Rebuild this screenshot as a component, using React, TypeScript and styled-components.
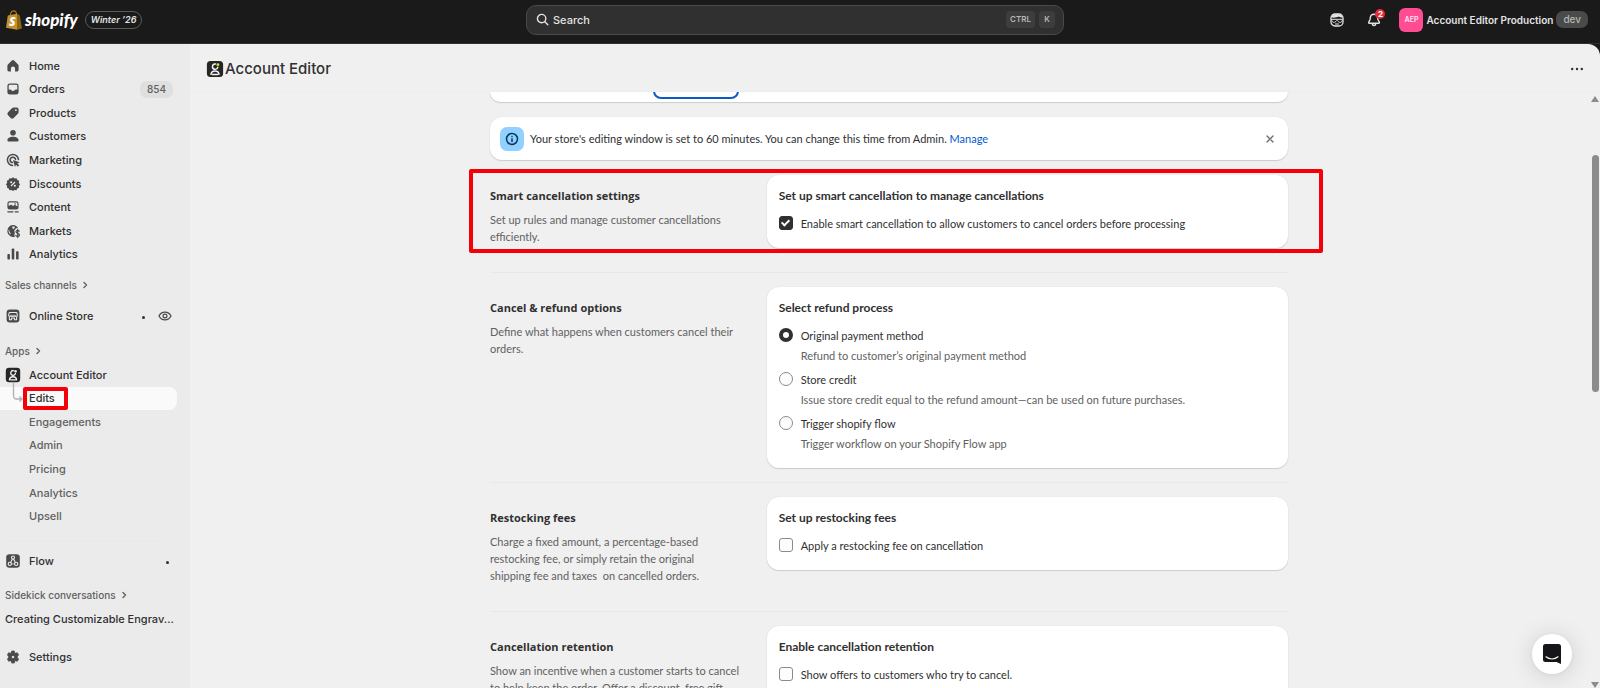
import React from "react";
import styled, { createGlobalStyle, css } from "styled-components";

const ui = `Inter, "Liberation Sans", sans-serif`;
const body = `Lato, "Open Sans", sans-serif`;

const GlobalStyle = createGlobalStyle`
  *, *::before, *::after { box-sizing: border-box; }
  body { margin: 0; background: #1a1a1a; font-family: ${ui}; font-size: 11px; color: #303030; }
  button, input { font: inherit; color: inherit; margin: 0; }
  button { border: 0; padding: 0; background: none; cursor: pointer; }
  a { color: inherit; text-decoration: none; }
  ul { list-style: none; margin: 0; padding: 0; }
  h1, h2, h3, p { margin: 0; }
  svg { display: block; flex: none; }
`;

/* ---------- Shell ---------- */

const Shell = styled.div`
  display: flex;
  flex-direction: column;
  height: 100vh;
  overflow: hidden;
`;

const TopBar = styled.header`
  flex: none;
  display: grid;
  grid-template-columns: 1fr minmax(200px, 538px) 1fr;
  align-items: center;
  height: 44px;
  padding: 0 12px 4px 2px;
  border-bottom: 1px solid #303030;
  background: #1a1a1a;
  color: #e3e3e3;
`;

const Brand = styled.a`
  display: flex;
  align-items: center;
  gap: 3px;
  padding-left: 4px;
  color: #ffffff;
`;

const Wordmark = styled.span`
  font: italic 900 17px/20px Lato, sans-serif;
`;

const Edition = styled.span`
  margin-left: 4px;
  padding: 0 5px;
  border: 1px solid #5a5a5a;
  border-radius: 9px;
  font: italic 600 9px/16px ${ui};
  color: #e3e3e3;
`;

const SearchBox = styled.label`
  display: flex;
  align-items: center;
  gap: 4px;
  height: 30px;
  padding: 0 8px 0 9px;
  border: 1px solid #4a4a4a;
  border-radius: 10px;
  background: #303030;
`;

const SearchInput = styled.input`
  flex: 1;
  min-width: 0;
  padding: 0;
  border: 0;
  outline: 0;
  background: none;
  font-weight: 500;
  &::placeholder { color: #e3e3e3; opacity: 1; }
`;

const Key = styled.kbd`
  min-width: 16px;
  padding: 0 4px;
  border-radius: 4px;
  background: #3d3d3d;
  color: #b5b5b5;
  font: 600 8px/17px ${ui};
  text-align: center;
`;

const Actions = styled.div`
  display: flex;
  align-items: center;
  justify-content: flex-end;
`;

const IconButton = styled.button`
  position: relative;
  display: grid;
  place-items: center;
  width: 24px;
  height: 24px;
  margin-right: 13px;
`;

const Badge = styled.span`
  position: absolute;
  top: 1px;
  right: 1px;
  width: 10px;
  height: 10px;
  border-radius: 5px;
  background: #e22c38;
  color: #ffffff;
  font: 700 8px/10px ${ui};
  text-align: center;
`;

const Account = styled.button`
  display: flex;
  align-items: center;
  gap: 3px;
  font-weight: 600;
  font-size: 10px;
  white-space: nowrap;
`;

const Avatar = styled.span`
  width: 24px;
  border-radius: 6px;
  background: #ff4c93;
  color: #ffd9e8;
  font: 700 7px/24px ${ui};
  text-align: center;
`;

const Env = styled.span`
  padding: 0 7px;
  border-radius: 7px;
  background: #4a4a4a;
  color: #b5b5b5;
  font: 500 10px/17px ${ui};
`;

const Workspace = styled.div`
  flex: 1;
  min-height: 0;
  display: flex;
`;

/* ---------- Sidebar ---------- */

const Sidebar = styled.nav`
  flex: none;
  display: flex;
  flex-direction: column;
  width: 190px;
  padding: 10px 13px 0 0;
  background: #ebebeb;
  color: #303030;
`;

const NavList = styled.ul<{ $height: number; $top?: number }>`
  flex: none;
  display: grid;
  grid-auto-rows: 1fr;
  height: ${(p) => p.$height}px;
  margin-top: ${(p) => p.$top ?? 0}px;
`;

const NavLink = styled.a<{ $sub?: boolean; $current?: boolean }>`
  position: relative;
  display: flex;
  align-items: center;
  gap: 8px;
  height: 100%;
  min-height: 23px;
  padding: 0 4px 0 ${(p) => (p.$sub ? 29 : 5)}px;
  border-radius: 0 8px 8px 0;
  color: #303030;
  font-weight: 500;
  ${(p) => p.$sub && css`color: #616161;`}
  ${(p) => p.$current && css`background: #fafafa; color: #303030;`}
`;

const NavText = styled.span`
  flex: 1;
  white-space: nowrap;
`;

const Count = styled.span`
  padding: 0 7px;
  border-radius: 7px;
  background: #dfdfdf;
  color: #616161;
  font: 500 10px/17px ${ui};
`;

const GroupLabel = styled.button<{ $top: number }>`
  display: flex;
  align-items: center;
  gap: 3px;
  height: 20px;
  margin-top: ${(p) => p.$top}px;
  padding-left: 5px;
  color: #616161;
  font-size: 10px;
  font-weight: 500;
`;

const NavRow = styled.div<{ $top: number }>`
  height: 24px;
  margin-top: ${(p) => p.$top}px;
`;

const Rule = styled.hr`
  width: 155px;
  margin: 13px 0 0 5px;
  border: 0;
  border-top: 1px solid #e8e8e8;
`;

const Dot = styled.span`
  width: 3px;
  height: 3px;
  margin: 2px 4px 0 0;
  border-radius: 50%;
  background: #303030;
`;

const Elbow = styled.svg`
  position: absolute;
  left: 12px;
  top: -4px;
`;

const Marker = styled.span`
  position: absolute;
  border: 4px solid #f40008;
  border-radius: 2px;
  pointer-events: none;
`;

const NavMarker = styled(Marker)`
  inset: 0 auto 0 23px;
  width: 45px;
`;

/* ---------- Main ---------- */

const Main = styled.main`
  flex: 1;
  min-width: 0;
  display: flex;
  flex-direction: column;
  border-radius: 0 12px 0 0;
  background: #f0f0f0;
`;

const PageBar = styled.div`
  flex: none;
  display: flex;
  align-items: center;
  gap: 1px;
  height: 48px;
  padding: 2px 16px 0;
  border-bottom: 1px solid #ededed;
`;

const PageTitle = styled.h1`
  flex: 1;
  font: 500 15px/20px ${ui};
`;

const Viewport = styled.div`
  flex: 1;
  min-height: 0;
  display: flex;
`;

const Scroller = styled.div`
  flex: 1;
  min-width: 0;
  overflow: hidden;
  font: 400 11px/17px ${body};
`;

const Content = styled.div`
  width: calc(100% - 48px);
  max-width: 798px;
  margin: 0 auto;
`;

const surface = css`
  background: #ffffff;
  box-shadow: 0 1px 1px #cccccc, 0 0 1px #cccccc;
`;

const TabStrip = styled.div`
  ${surface}
  display: flex;
  align-items: flex-end;
  height: 10px;
  padding: 0 163px 3px;
  border-radius: 0 0 12px 12px;
  clip-path: inset(0 -4px -4px);
`;

const Tab = styled.button`
  width: 86px;
  height: 28px;
  border: 2px solid #0a5bc4;
  border-radius: 8px;
`;

const Banner = styled.div`
  ${surface}
  display: flex;
  align-items: center;
  gap: 6px;
  height: 43px;
  margin: 15px 0;
  padding: 0 12px 0 10px;
  border-radius: 12px;
`;

const BannerIcon = styled.span`
  display: grid;
  place-items: center;
  width: 24px;
  height: 24px;
  border-radius: 7px;
  background: #91d0ff;
`;

const BannerText = styled.p`
  flex: 1;
`;

const Link = styled.a`
  color: #005bd3;
`;

const Section = styled.section`
  position: relative;
  display: grid;
  grid-template-columns: 1fr 2fr;
  gap: 16px;
  align-items: start;
`;

const SectionMarker = styled(Marker)`
  inset: -6px -35px 5px -21px;
`;

const Divider = styled.hr`
  margin: 14px 0;
  border: 0;
  border-top: 1px solid #e8e8e8;
`;

const Intro = styled.div`
  display: grid;
  gap: 5px;
  padding: 11px 0 13px;
  color: #616161;
`;

const Heading = styled.h2`
  font: 700 11px/20px "Open Sans", sans-serif;
  color: #303030;
`;

const IntroText = styled.p`
  max-width: 252px;
  white-space: pre-wrap;
`;

const Card = styled.div`
  ${surface}
  padding: 12px 12px 13px;
  border-radius: 12px;
`;

const CardHeading = styled.h3`
  margin-bottom: 6px;
  font: 700 12px/18px ${body};
`;

const Choice = styled.label`
  display: flex;
  align-items: center;
  gap: 8px;
  min-height: 24px;
`;

const Help = styled.p`
  padding: 0 0 2px 22px;
  line-height: 18px;
  color: #616161;
`;

const Checkbox = styled.input.attrs({ type: "checkbox" })`
  appearance: none;
  display: grid;
  place-items: center;
  width: 14px;
  height: 14px;
  border: 1px solid #8a8a8a;
  border-radius: 3px;
  background: #fdfdfd;
  &:checked { border-color: #303030; background: #303030; }
  &:checked::after {
    content: "";
    width: 5px;
    height: 8px;
    margin-top: -2px;
    border: solid #ffffff;
    border-width: 0 2px 2px 0;
    transform: rotate(45deg);
  }
`;

const Radio = styled.input.attrs({ type: "radio" })`
  appearance: none;
  width: 14px;
  height: 14px;
  border: 1px solid #8a8a8a;
  border-radius: 50%;
  background: #fdfdfd;
  &:checked { border: 4px solid #303030; }
`;

const ScrollBar = styled.div`
  flex: none;
  display: flex;
  flex-direction: column;
  align-items: center;
  width: 12px;
  padding: 4px 0 0 2px;
`;

const Track = styled.div`
  flex: 1;
  padding-top: 53px;
`;

const Thumb = styled.div`
  width: 7px;
  height: 45%;
  border-radius: 4px;
  background: #8b8b8b;
`;

const ChatButton = styled.button`
  position: fixed;
  right: 28px;
  bottom: 14px;
  display: grid;
  place-items: center;
  width: 40px;
  height: 40px;
  border-radius: 50%;
  background: #ffffff;
  box-shadow: 0 1px 6px rgba(0, 0, 0, 0.06), 0 2px 24px rgba(0, 0, 0, 0.14);
`;

/* ---------- Icons ---------- */

type IconProps = { children: React.ReactNode; size?: number };

const Icon = ({ children, size = 16 }: IconProps) => (
  <svg width={size} height={size} viewBox="0 0 20 20" fill="#4a4a4a" aria-hidden="true">
    {children}
  </svg>
);

const HomeIcon = () => (
  <Icon>
    <path d="M8.6 3.1a2 2 0 0 1 2.8 0l4.7 4.6c.6.6.9 1.300.9 2.100v5.200A1.800 1.800 0 0 1 15.200 16.800H12.600v-3.600a2.600 2.600 0 0 0-5.200 0v3.600H4.800A1.800 1.800 0 0 1 3 15V9.800c0-.8.3-1.500.9-2.100z" />
  </Icon>
);
const OrdersIcon = () => (
  <Icon>
    <path
      fillRule="evenodd"
      d="M6 3h8a3 3 0 0 1 3 3v8a3 3 0 0 1-3 3H6a3 3 0 0 1-3-3V6a3 3 0 0 1 3-3zm0 1.600A1.400 1.400 0 0 0 4.600 6v4.500h1.900c.7 0 1.200.4 1.500 1 .4.700 1.100 1 2 1s1.600-.3 2-1c.3-.6.8-1 1.500-1h1.900V6A1.400 1.400 0 0 0 14 4.600z"
    />
  </Icon>
);
const TagIcon = () => (
  <Icon>
    <path
      fillRule="evenodd"
      d="M11.200 3h3.600A2.200 2.200 0 0 1 17 5.200v3.600c0 .8-.3 1.600-.9 2.200l-5.300 5.200a2.600 2.600 0 0 1-3.700 0l-3.300-3.300a2.600 2.600 0 0 1 0-3.700L9 3.900C9.600 3.300 10.400 3 11.200 3zM13.600 7.600a1.200 1.200 0 1 0 0-2.400 1.200 1.200 0 0 0 0 2.400z"
    />
  </Icon>
);
const PersonIcon = () => (
  <Icon>
    <circle cx="10" cy="6" r="3.500" />
    <path d="M3 15.200c0-2.600 3.200-4.300 7-4.300s7 1.700 7 4.300c0 1-.8 1.600-1.700 1.600H4.700c-.9 0-1.700-.6-1.700-1.600z" />
  </Icon>
);
const TargetIcon = () => (
  <Icon>
    <g fill="none" stroke="#4a4a4a" strokeWidth="1.900" strokeLinecap="round">
      <path d="M16.800 9.500A6.900 6.900 0 1 0 9.500 16.800" />
      <path d="M13.200 9.300A3.400 3.400 0 1 0 9.300 13.200" />
    </g>
    <path d="M10 10l8.400 2.900-3 1.500 2.300 2.300-1.600 1.600-2.300-2.300-1.300 2.700z" />
  </Icon>
);
const DiscountIcon = () => (
  <Icon>
    <path d="M10 2.200l2 1.500 2.500-.4.9 2.300 2.300.9-.4 2.500 1.500 2-1.500 2 .2 2.300-2.200.9-.9 2.200-2.400-.3-2 1.300-2-1.300-2.400.3-.9-2.200-2.200-.9.200-2.300-1.500-2 1.500-2-.4-2.500 2.300-.9.900-2.300 2.500.4z" transform="translate(0 -.5)" />
    <g stroke="#ebebeb" strokeWidth="1.400" fill="#ebebeb">
      <path d="M7.500 12.500l5-5" />
      <circle cx="7.700" cy="7.900" r=".6" />
      <circle cx="12.300" cy="12.200" r=".6" />
    </g>
  </Icon>
);
const ContentIcon = () => (
  <Icon>
    <path
      fillRule="evenodd"
      d="M5.800 2.800h8.400A2.800 2.800 0 0 1 17 5.600v4.600a2.800 2.800 0 0 1-2.800 2.800H5.800A2.800 2.800 0 0 1 3 10.200V5.600a2.800 2.800 0 0 1 2.800-2.800zm0 1.500c-.8 0-1.300.5-1.300 1.300v3.200l2.200-1.400c.5-.4 1.200-.4 1.700 0l1.700 1.500 1.300-1c.5-.4 1.200-.4 1.700 0l2.400 1.400V5.600c0-.8-.5-1.300-1.300-1.300z"
    />
    <circle cx="12.600" cy="6.200" r="1" />
    <path d="M3 15.200h7.500v1.800H3zM12.200 15.200H17v1.800h-4.800z" />
  </Icon>
);
const MarketsIcon = () => (
  <Icon>
    <path
      fillRule="evenodd"
      d="M10 2.500c2.900 0 5.300 1.600 6.500 4-1.200-.3-2.700.1-3.600 1-1.500 1.500-1.500 3.500-.5 5-.9 1.200-.9 3.200 0 4.700A7.500 7.500 0 1 1 10 2.500zM4.600 8.200c-.6 2.300.2 4.700 2.200 6.200.5-1 .2-1.800-.4-2.500-.7-.8-1.300-1.300-.9-2.400zM9.800 4.200C9 5 8.800 6 9.500 6.800c.6.700 1.600.4 2.200-.3.500-.6.700-1.200.5-1.800z"
    />
    <path
      d="M17.800 10.300c-.5-.8-1.300-1-2-1-1.200 0-2 .7-2 1.700 0 2.500 4.300 1.300 4.300 4 0 1.100-.9 1.900-2.200 1.900-1 0-1.900-.4-2.300-1.300M15.900 8v10.200"
      fill="none"
      stroke="#4a4a4a"
      strokeWidth="1.500"
      strokeLinecap="round"
    />
  </Icon>
);
const BarsIcon = () => (
  <Icon>
    <rect x="3" y="10" width="3.200" height="7" rx="1" />
    <rect x="8.400" y="3" width="3.200" height="14" rx="1" />
    <rect x="13.800" y="6.500" width="3.200" height="10.500" rx="1" />
  </Icon>
);
const StoreIcon = () => (
  <Icon>
    <rect x="2" y="2" width="16" height="16" rx="4" />
    <g fill="none" stroke="#ebebeb" strokeWidth="1.300" strokeLinejoin="round">
      <path d="M5.500 5.500h9l1 3.500c0 1-.8 1.500-1.500 1.500s-1.500-.5-1.500-1.500c0 1-.7 1.500-1.300 1.500S10 10 10 9c0 1-.6 1.500-1.200 1.500S7.500 10 7.500 9c0 1-.8 1.500-1.500 1.500S4.500 10 4.500 9z" />
      <path d="M5.500 10.500v4.200h2.700v-2.200h3.600v2.200h2.700v-4.200" />
    </g>
  </Icon>
);
const EditorIcon = ({ size = 16, accent = "#ebebeb" }: { size?: number; accent?: string }) => (
  <Icon size={size}>
    <rect x="1" y="1" width="18" height="18" rx="4" fill="#262626" />
    <g fill="none" stroke="#f4f4f4" strokeWidth="1.600" strokeLinecap="round">
      <path d="M10.500 4.400a3 3 0 1 0 2.600 3.600" />
      <path d="M5.500 16c.3-2.500 2-3.800 4.500-3.800s4.200 1.300 4.500 3.800M7.200 16.200h5.600" />
    </g>
    <circle cx="13.200" cy="5.200" r="1.600" fill={accent} />
  </Icon>
);
const FlowIcon = () => (
  <Icon>
    <rect x="1.500" y="1.500" width="17" height="17" rx="4" />
    <g fill="none" stroke="#ebebeb" strokeWidth="1.400">
      <circle cx="10" cy="5.700" r="1.900" />
      <circle cx="6" cy="13.600" r="2" />
      <circle cx="14" cy="13.600" r="2" />
      <path d="M9.300 7.600L7 11.800M10.700 7.600l2.300 4.200M8 13.600h1.500M10.500 13.600H12" />
    </g>
  </Icon>
);
const GearIcon = () => (
  <Icon>
    <path
      fillRule="evenodd"
      d="M8.400 2.500h3.200l.5 2.100 1.200.7 2.100-.6 1.600 2.700-1.500 1.600v2l1.500 1.600-1.600 2.700-2.100-.6-1.200.7-.5 2.100H8.400l-.5-2.100-1.200-.7-2.100.6L3 12.600 4.500 11V9L3 7.400l1.600-2.700 2.100.6 1.200-.7zM10 12a2 2 0 1 0 0-4 2 2 0 0 0 0 4z"
      stroke="#4a4a4a"
      strokeLinejoin="round"
    />
  </Icon>
);
const EyeIcon = () => (
  <Icon>
    <g fill="none" stroke="#4a4a4a" strokeWidth="1.500">
      <path d="M2.500 10c1.500-3 4.300-4.800 7.500-4.800s6 1.800 7.500 4.800c-1.500 3-4.300 4.800-7.500 4.800S4 13 2.500 10z" />
      <circle cx="10" cy="10" r="2.400" />
    </g>
  </Icon>
);
const Chevron = () => (
  <svg width="10" height="10" viewBox="0 0 10 10" fill="none" stroke="#616161" strokeWidth="1.400" strokeLinecap="round" strokeLinejoin="round" aria-hidden="true">
    <path d="M4 2.500L6.500 5 4 7.500" />
  </svg>
);
const BagLogo = () => (
  <svg width="16" height="20" viewBox="0 0 16 20" aria-hidden="true">
    <path d="M4.200 5.800C4.500 3 6 .9 7.900.9c1.600 0 2.600 1.600 2.700 4.200" fill="none" stroke="#a87a1c" strokeWidth="1.100" />
    <path d="M1.800 5.600L11 3.800v16L0 17.700z" fill="#c4922c" />
    <path d="M11 3.800l2.700 1.400L16 18.500l-5 1.300z" fill="#8f6410" />
    <text x="3" y="16" fontFamily="Open Sans, sans-serif" fontSize="12" fontWeight="800" fontStyle="italic" fill="#fff">
      S
    </text>
  </svg>
);

/* ---------- Data ---------- */

const primary = [
  { label: "Home", icon: <HomeIcon /> },
  { label: "Orders", icon: <OrdersIcon />, count: "854" },
  { label: "Products", icon: <TagIcon /> },
  { label: "Customers", icon: <PersonIcon /> },
  { label: "Marketing", icon: <TargetIcon /> },
  { label: "Discounts", icon: <DiscountIcon /> },
  { label: "Content", icon: <ContentIcon /> },
  { label: "Markets", icon: <MarketsIcon /> },
  { label: "Analytics", icon: <BarsIcon /> },
];

const appPages = ["Engagements", "Admin", "Pricing", "Analytics", "Upsell"];

const refundOptions = [
  { id: "original", label: "Original payment method", help: "Refund to customer’s original payment method" },
  { id: "credit", label: "Store credit", help: "Issue store credit equal to the refund amount—can be used on future purchases." },
  { id: "flow", label: "Trigger shopify flow", help: "Trigger workflow on your Shopify Flow app" },
];

/* ---------- Composition ---------- */

const SettingsIntro = ({ title, text }: { title: string; text: string }) => (
  <Intro>
    <Heading>{title}</Heading>
    <IntroText>{text}</IntroText>
  </Intro>
);

const Header = () => (
  <TopBar>
    <Brand href="#">
      <BagLogo />
      <Wordmark>shopify</Wordmark>
      <Edition>Winter ’26</Edition>
    </Brand>
    <SearchBox>
      <svg width="13" height="13" viewBox="0 0 13 13" fill="none" stroke="#e3e3e3" strokeWidth="1.400" strokeLinecap="round" aria-hidden="true">
        <circle cx="5.600" cy="5.600" r="4.200" />
        <path d="M8.800 8.800l3 3" />
      </svg>
      <SearchInput type="search" placeholder="Search" aria-label="Search" />
      <Key>CTRL</Key>
      <Key>K</Key>
    </SearchBox>
    <Actions>
      <IconButton aria-label="Sidekick">
        <svg width="14" height="14" viewBox="0 0 14 14" aria-hidden="true">
          <rect x="1" y="1" width="12" height="12" rx="4" fill="none" stroke="#e3e3e3" strokeWidth="1.300" />
          <path d="M1.500 4.600C1.500 2 4 1 7 1s5.500 1 5.500 3.600c-1.700-.1-2.700-.4-3.600-1C7.200 4.500 4.500 4.900 1.500 4.600z" fill="#e3e3e3" />
          <path d="M1 6.300h12M2 7.500c.2 1.300.8 1.900 1.800 1.900S5.700 8.700 7 7.300c1.300 1.400 2.200 2.100 3.200 2.100s1.600-.6 1.800-1.900" fill="none" stroke="#e3e3e3" strokeWidth="1" />
          <path d="M5.500 11h3" stroke="#e3e3e3" strokeWidth="1" strokeLinecap="round" />
        </svg>
      </IconButton>
      <IconButton aria-label="Notifications">
        <svg width="14" height="14" viewBox="0 0 14 14" fill="none" stroke="#e3e3e3" strokeWidth="1.400" strokeLinejoin="round" aria-hidden="true">
          <path d="M7 1.200c-2.300 0-3.700 1.700-3.700 3.800 0 1.800-.5 2.800-1.400 3.700-.6.600-.3 1.500.5 1.500h9.200c.8 0 1.100-.9.500-1.500-.9-.9-1.400-1.900-1.400-3.700C10.700 2.900 9.300 1.200 7 1.200z" />
          <path d="M5.300 10.500c0 1.300.7 2 1.700 2s1.700-.7 1.700-2" />
        </svg>
        <Badge>2</Badge>
      </IconButton>
      <Account>
        <Avatar>AEP</Avatar>
        Account Editor Production
        <Env>dev</Env>
      </Account>
    </Actions>
  </TopBar>
);

const SideNav = () => (
  <Sidebar aria-label="Main">
    <NavList $height={212}>
      {primary.map((item) => (
        <li key={item.label}>
          <NavLink href="#">
            {item.icon}
            <NavText>{item.label}</NavText>
            {item.count && <Count>{item.count}</Count>}
          </NavLink>
        </li>
      ))}
    </NavList>
    <GroupLabel $top={9}>
      Sales channels
      <Chevron />
    </GroupLabel>
    <NavRow $top={9}>
      <NavLink href="#">
        <StoreIcon />
        <NavText>Online Store</NavText>
        <Dot />
        <EyeIcon />
      </NavLink>
    </NavRow>
    <GroupLabel $top={13}>
      Apps
      <Chevron />
    </GroupLabel>
    <NavList $height={165} $top={2}>
      <li>
        <NavLink href="#">
          <EditorIcon />
          <NavText>Account Editor</NavText>
        </NavLink>
      </li>
      <li>
        <NavLink href="#" $sub $current aria-current="page">
          <Elbow width="11" height="20" viewBox="0 0 11 20" fill="none" stroke="#b0b0b0" strokeWidth="1.300" aria-hidden="true">
            <path d="M1.500 0v12.500c0 2 1 3.500 3 3.500H10M7.500 13.500L10 16l-2.500 2.500" />
          </Elbow>
          <NavText>Edits</NavText>
          <NavMarker />
        </NavLink>
      </li>
      {appPages.map((page) => (
        <li key={page}>
          <NavLink href="#" $sub>
            <NavText>{page}</NavText>
          </NavLink>
        </li>
      ))}
    </NavList>
    <Rule />
    <NavRow $top={7}>
      <NavLink href="#">
        <FlowIcon />
        <NavText>Flow</NavText>
        <Dot />
      </NavLink>
    </NavRow>
    <GroupLabel $top={12}>
      Sidekick conversations
      <Chevron />
    </GroupLabel>
    <NavRow $top={2}>
      <NavLink href="#">
        <NavText>Creating Customizable Engrav...</NavText>
      </NavLink>
    </NavRow>
    <NavRow $top={14}>
      <NavLink href="#">
        <GearIcon />
        <NavText>Settings</NavText>
      </NavLink>
    </NavRow>
  </Sidebar>
);

const SettingsPage = () => (
  <Content>
    <TabStrip>
      <Tab aria-label="Cancellations" />
    </TabStrip>
    <Banner role="status">
      <BannerIcon>
        <svg width="14" height="14" viewBox="0 0 14 14" fill="none" stroke="#003a5a" strokeWidth="1.500" strokeLinecap="round" aria-hidden="true">
          <circle cx="7" cy="7" r="5.500" />
          <path d="M7 6.800v2.700M7 4.400v.1" />
        </svg>
      </BannerIcon>
      <BannerText>
        Your store's editing window is set to 60 minutes. You can change this time from Admin. <Link href="#">Manage</Link>
      </BannerText>
      <button aria-label="Dismiss">
        <svg width="12" height="12" viewBox="0 0 12 12" stroke="#6a6a6a" strokeWidth="1.300" strokeLinecap="round" aria-hidden="true">
          <path d="M3 3l6 6M9 3L3 9" />
        </svg>
      </button>
    </Banner>

    <Section>
      <SettingsIntro title="Smart cancellation settings" text="Set up rules and manage customer cancellations efficiently." />
      <Card>
        <CardHeading>Set up smart cancellation to manage cancellations</CardHeading>
        <Choice>
          <Checkbox defaultChecked />
          Enable smart cancellation to allow customers to cancel orders before processing
        </Choice>
      </Card>
      <SectionMarker />
    </Section>
    <Divider />
    <Section>
      <SettingsIntro title="Cancel & refund options" text="Define what happens when customers cancel their orders." />
      <Card role="radiogroup" aria-label="Select refund process">
        <CardHeading>Select refund process</CardHeading>
        {refundOptions.map((option, index) => (
          <div key={option.id}>
            <Choice>
              <Radio name="refund" value={option.id} defaultChecked={index === 0} aria-describedby={`${option.id}-help`} />
              {option.label}
            </Choice>
            <Help id={`${option.id}-help`}>{option.help}</Help>
          </div>
        ))}
      </Card>
    </Section>
    <Divider />
    <Section>
      <SettingsIntro
        title="Restocking fees"
        text={"Charge a fixed amount, a percentage-based restocking fee, or simply retain the original\nshipping fee and taxes  on cancelled orders."}
      />
      <Card>
        <CardHeading>Set up restocking fees</CardHeading>
        <Choice>
          <Checkbox />
          Apply a restocking fee on cancellation
        </Choice>
      </Card>
    </Section>
    <Divider />
    <Section>
      <SettingsIntro
        title="Cancellation retention"
        text="Show an incentive when a customer starts to cancel to help keep the order. Offer a discount, free gift,"
      />
      <Card>
        <CardHeading>Enable cancellation retention</CardHeading>
        <Choice>
          <Checkbox />
          Show offers to customers who try to cancel.
        </Choice>
      </Card>
    </Section>
  </Content>
);

export default function App() {
  return (
    <>
      <GlobalStyle />
      <Shell>
        <Header />
        <Workspace>
          <SideNav />
          <Main>
            <PageBar>
              <EditorIcon size={18} accent="#c8e62a" />
              <PageTitle>Account Editor</PageTitle>
              <button aria-label="More actions">
                <svg width="14" height="14" viewBox="0 0 14 14" fill="#303030" aria-hidden="true">
                  <circle cx="2.200" cy="7" r="1.200" />
                  <circle cx="7" cy="7" r="1.200" />
                  <circle cx="11.800" cy="7" r="1.200" />
                </svg>
              </button>
            </PageBar>
            <Viewport>
              <Scroller>
                <SettingsPage />
              </Scroller>
              <ScrollBar aria-hidden="true">
                <svg width="8" height="6" viewBox="0 0 8 6" fill="#8b8b8b">
                  <path d="M4 0l4 6H0z" />
                </svg>
                <Track>
                  <Thumb />
                </Track>
                <svg width="8" height="6" viewBox="0 0 8 6" fill="#8b8b8b">
                  <path d="M0 0h8L4 6z" />
                </svg>
              </ScrollBar>
            </Viewport>
          </Main>
        </Workspace>
        <ChatButton aria-label="Open chat">
          <svg width="18" height="20" viewBox="0 0 18 20" aria-hidden="true">
            <path d="M2.500 0h13A2.500 2.500 0 0 1 18 2.500V20l-4.500-2h-11A2.500 2.500 0 0 1 0 15.500v-13A2.500 2.500 0 0 1 2.500 0z" fill="#14161a" />
            <path d="M3 12.800c3.500 2.900 8.500 2.900 12 0" stroke="#ffffff" strokeWidth="1.200" strokeLinecap="round" fill="none" />
          </svg>
        </ChatButton>
      </Shell>
    </>
  );
}
